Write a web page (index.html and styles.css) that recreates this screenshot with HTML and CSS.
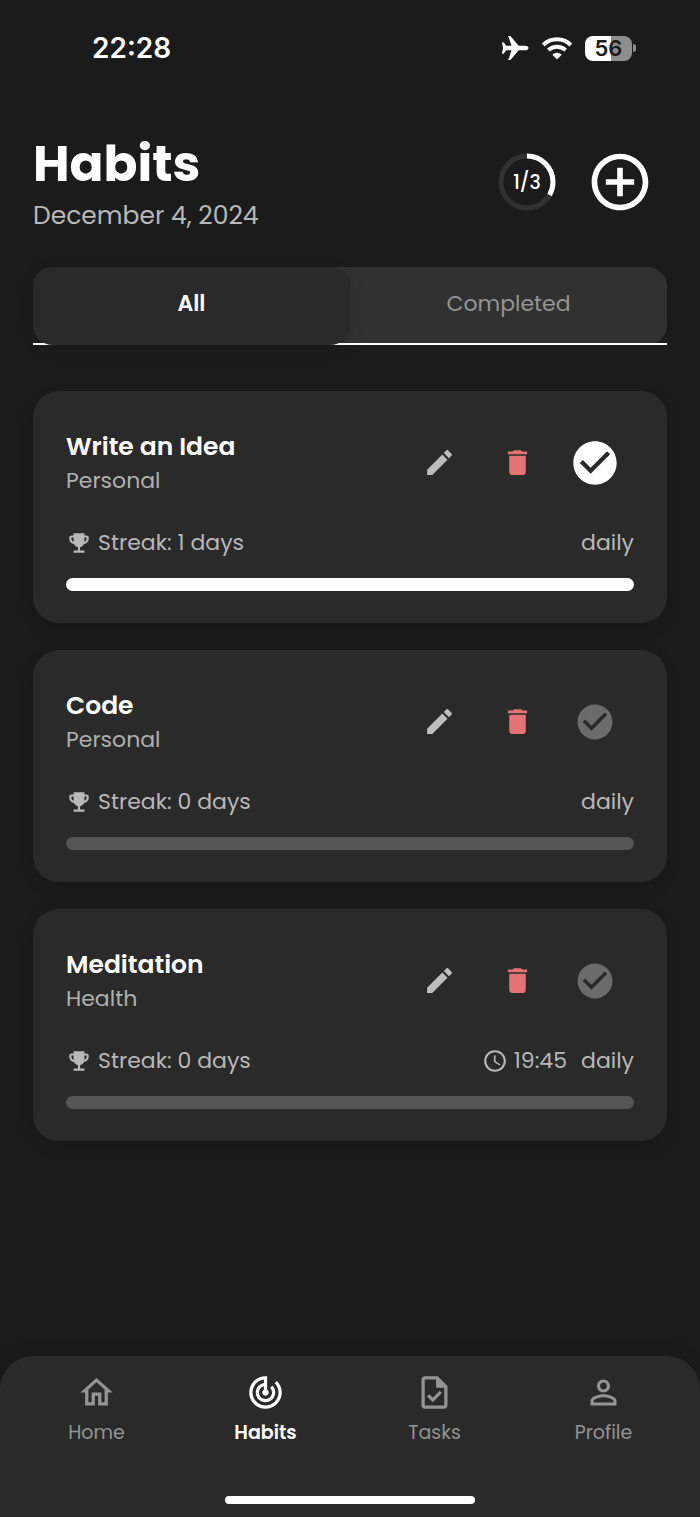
FILE: index.html
```html
<!DOCTYPE html>
<html lang="en">
<head>
  <meta charset="UTF-8">
  <meta name="viewport" content="width=device-width, initial-scale=1.0">
  <title>Habits</title>
  <link rel="stylesheet" href="styles.css">
</head>
<body>

<!-- Shared icons -->
<svg class="sprite" aria-hidden="true">
  <symbol id="icon-edit" viewBox="0 0 24 24">
    <path d="M3 17.25V21h3.75L17.81 9.94l-3.75-3.75L3 17.25zM20.71 7.04c.39-.39.39-1.02 0-1.41l-2.34-2.34c-.39-.39-1.02-.39-1.41 0l-1.83 1.83 3.75 3.75 1.83-1.83z"/>
  </symbol>
  <symbol id="icon-delete" viewBox="0 0 24 24">
    <path d="M6 19c0 1.1.9 2 2 2h8c1.1 0 2-.9 2-2V7H6v12zM19 4h-3.5l-1-1h-5l-1 1H5v2h14V4z"/>
  </symbol>
  <symbol id="icon-check" viewBox="0 0 24 24">
    <path d="M12 2C6.48 2 2 6.48 2 12s4.48 10 10 10 10-4.48 10-10S17.52 2 12 2zm-2 15l-5-5 1.41-1.41L10 14.17l7.59-7.59L19 8l-9 9z"/>
  </symbol>
  <symbol id="icon-trophy" viewBox="0 0 24 24">
    <path d="M19 5h-2V3H7v2H5c-1.1 0-2 .9-2 2v1c0 2.55 1.92 4.63 4.39 4.94.63 1.5 1.98 2.63 3.61 2.96V19H7v2h10v-2h-4v-3.1c1.63-.33 2.98-1.46 3.61-2.96C19.08 12.63 21 10.55 21 8V7c0-1.1-.9-2-2-2zM5 8V7h2v3.82C5.84 10.4 5 9.3 5 8zm14 0c0 1.3-.84 2.4-2 2.82V7h2v1z"/>
  </symbol>
  <symbol id="icon-clock" viewBox="0 0 24 24">
    <path d="M11.99 2C6.47 2 2 6.48 2 12s4.47 10 9.99 10C17.52 22 22 17.52 22 12S17.52 2 11.99 2zM12 20c-4.42 0-8-3.58-8-8s3.58-8 8-8 8 3.58 8 8-3.58 8-8 8zm.5-13H11v6l5.25 3.15.75-1.23-4.5-2.67z"/>
  </symbol>
</svg>

<div class="status-bar">
  <span class="clock">22:28</span>
  <div class="status-icons">
    <svg class="plane" viewBox="0 0 28 26" aria-hidden="true">
      <path d="M27.5 13c0-1.6-1.6-2.3-3.6-2.3h-6.2L10.3 1.9C9.7 1.2 9.2 1 8.4 1H7.2l3.4 9.7H5.2L3 7.8C2.700 7.400 2.400 7.200 1.900 7.200H1L2 13 1 18.800h.9c.5 0 .8-.2 1.100-.6l2.200-2.900h5.400L7.200 25h1.200c.8 0 1.300-.2 1.900-.9l7.400-8.800h6.200c2 0 3.600-.7 3.600-2.300z"/>
    </svg>
    <svg class="wifi" viewBox="0 0 32 24" aria-hidden="true">
      <path class="wifi-arc" d="M2.200 9a19.500 19.500 0 0 1 27.600 0M7.400 14.200a12.200 12.200 0 0 1 17.200 0"/>
      <path d="M16 23.500l4.700-4.800a6.700 6.700 0 0 0-9.400 0z"/>
    </svg>
    <div class="battery"><span class="battery-body">56</span><span class="battery-tip"></span></div>
  </div>
</div>

<main>
  <header class="header">
    <div>
      <h1>Habits</h1>
      <p class="date">December 4, 2024</p>
    </div>
    <div class="header-actions">
      <div class="ring">
        <svg viewBox="0 0 58 58" aria-hidden="true">
          <circle class="ring-track" cx="29" cy="29" r="26"/>
          <circle class="ring-value" cx="29" cy="29" r="26" pathLength="3"/>
        </svg>
        <span>1/3</span>
      </div>
      <button class="add-btn" aria-label="Add habit">
        <svg viewBox="0 0 24 24"><path d="M13 7h-2v4H7v2h4v4h2v-4h4v-2h-4V7zm-1-5C6.48 2 2 6.48 2 12s4.48 10 10 10 10-4.48 10-10S17.52 2 12 2zm0 18c-4.41 0-8-3.59-8-8s3.59-8 8-8 8 3.59 8 8-3.59 8-8 8z"/></svg>
      </button>
    </div>
  </header>

  <div class="tab-bar">
    <div class="tabs" role="tablist">
      <button class="tab active" role="tab" aria-selected="true">All</button>
      <button class="tab" role="tab" aria-selected="false">Completed</button>
    </div>
  </div>

  <section class="habits">
    <article class="card done">
      <div class="card-top">
        <div>
          <h2>Write an Idea</h2>
          <p class="category">Personal</p>
        </div>
        <div class="actions">
          <button class="edit" aria-label="Edit"><svg><use href="#icon-edit"/></svg></button>
          <button class="delete" aria-label="Delete"><svg><use href="#icon-delete"/></svg></button>
          <button class="check" aria-label="Mark as not done"><svg><use href="#icon-check"/></svg></button>
        </div>
      </div>
      <div class="card-info">
        <span class="meta"><svg><use href="#icon-trophy"/></svg>Streak: 1 days</span>
        <span class="repeat">daily</span>
      </div>
      <div class="bar"></div>
    </article>

    <article class="card">
      <div class="card-top">
        <div>
          <h2>Code</h2>
          <p class="category">Personal</p>
        </div>
        <div class="actions">
          <button class="edit" aria-label="Edit"><svg><use href="#icon-edit"/></svg></button>
          <button class="delete" aria-label="Delete"><svg><use href="#icon-delete"/></svg></button>
          <button class="check" aria-label="Mark as done"><svg><use href="#icon-check"/></svg></button>
        </div>
      </div>
      <div class="card-info">
        <span class="meta"><svg><use href="#icon-trophy"/></svg>Streak: 0 days</span>
        <span class="repeat">daily</span>
      </div>
      <div class="bar"></div>
    </article>

    <article class="card">
      <div class="card-top">
        <div>
          <h2>Meditation</h2>
          <p class="category">Health</p>
        </div>
        <div class="actions">
          <button class="edit" aria-label="Edit"><svg><use href="#icon-edit"/></svg></button>
          <button class="delete" aria-label="Delete"><svg><use href="#icon-delete"/></svg></button>
          <button class="check" aria-label="Mark as done"><svg><use href="#icon-check"/></svg></button>
        </div>
      </div>
      <div class="card-info">
        <span class="meta"><svg><use href="#icon-trophy"/></svg>Streak: 0 days</span>
        <span class="meta"><svg><use href="#icon-clock"/></svg>19:45</span>
        <span class="repeat">daily</span>
      </div>
      <div class="bar"></div>
    </article>
  </section>
</main>

<footer class="bottom">
  <nav class="nav">
    <a href="#home">
      <svg viewBox="0 0 24 24"><path d="M12 5.69l5 4.5V18h-2v-6H9v6H7v-7.81l5-4.5M12 3L2 12h3v8h6v-6h2v6h6v-8h3L12 3z"/></svg>
      Home
    </a>
    <a href="#habits" class="current" aria-current="page">
      <svg viewBox="0 0 24 24"><path d="M19.07 4.93l-1.41 1.41C19.1 7.79 20 9.79 20 12c0 4.42-3.58 8-8 8s-8-3.58-8-8c0-4.08 3.05-7.44 7-7.93v2.02C8.16 6.57 6 9.03 6 12c0 3.31 2.69 6 6 6s6-2.69 6-6c0-1.66-.67-3.16-1.76-4.24l-1.41 1.41C15.55 9.9 16 10.9 16 12c0 2.21-1.79 4-4 4s-4-1.79-4-4c0-1.86 1.28-3.41 3-3.86v2.14c-.6.35-1 .98-1 1.72 0 1.1.9 2 2 2s2-.9 2-2c0-.74-.4-1.38-1-1.72V2h-1C6.48 2 2 6.48 2 12s4.48 10 10 10 10-4.48 10-10c0-2.76-1.12-5.26-2.93-7.07z"/></svg>
      Habits
    </a>
    <a href="#tasks">
      <svg viewBox="0 0 24 24"><path d="M14 2H6c-1.1 0-2 .9-2 2v16c0 1.1.89 2 1.99 2H18c1.1 0 2-.9 2-2V8l-6-6zm4 18H6V4h7v5h5v11zm-9.18-6.95L7.4 14.46 10.94 18l5.66-5.66-1.41-1.41-4.24 4.24-2.13-2.12z"/></svg>
      Tasks
    </a>
    <a href="#profile">
      <svg viewBox="0 0 24 24"><path d="M12 5.9c1.16 0 2.1.94 2.1 2.1s-.94 2.1-2.1 2.1S9.9 9.16 9.9 8s.94-2.1 2.1-2.1m0 9c2.97 0 6.1 1.46 6.1 2.1v1.1H5.9V17c0-.64 3.13-2.1 6.1-2.1M12 4C9.79 4 8 5.79 8 8s1.79 4 4 4 4-1.79 4-4-1.79-4-4-4zm0 9c-2.67 0-8 1.34-8 4v3h16v-3c0-2.66-5.33-4-8-4z"/></svg>
      Profile
    </a>
  </nav>
  <div class="home-indicator"></div>
</footer>

</body>
</html>
```
FILE: styles.css
```css
* {
  box-sizing: border-box;
}

body {
  margin: 0;
  min-height: 100vh;
  display: flex;
  flex-direction: column;
  background: #1b1b1b;
  color: #fff;
  font-family: Poppins, Inter, sans-serif;
}

h1, h2, p {
  margin: 0;
}

button {
  padding: 0;
  border: none;
  background: none;
  color: inherit;
  font: inherit;
  cursor: pointer;
}

svg {
  display: block;
  fill: currentColor;
}

.sprite {
  display: none;
}

/* Status bar */
.status-bar {
  height: 96px;
  padding: 0 64px 0 92px;
  display: flex;
  align-items: center;
  justify-content: space-between;
}

.clock {
  font-family: Inter, sans-serif;
  font-size: 28px;
  font-weight: 600;
}

.status-icons {
  display: flex;
  align-items: center;
  gap: 12px;
}

.plane {
  width: 28px;
  height: 26px;
}

.wifi {
  width: 32px;
  height: 24px;
}

.wifi-arc {
  fill: none;
  stroke: #fff;
  stroke-width: 4;
}

.battery {
  display: flex;
  align-items: center;
  gap: 1px;
}

.battery-body {
  width: 47px;
  line-height: 25px;
  border-radius: 8px;
  background: linear-gradient(to right, #fff 56%, #8e8e8e 56%);
  color: #1b1b1b;
  font-family: Inter, sans-serif;
  font-size: 22px;
  font-weight: 600;
  text-align: center;
}

.battery-tip {
  width: 3px;
  height: 8px;
  border-radius: 0 4px 4px 0;
  background: #8e8e8e;
}

/* Page */
main {
  flex: 1;
  padding: 36px 33px 48px;
}

.header {
  display: flex;
  align-items: center;
  justify-content: space-between;
  margin-bottom: 35px;
}

h1 {
  font-size: 50px;
  line-height: 64px;
  font-weight: 700;
}

.date {
  margin-top: 4px;
  font-size: 25px;
  line-height: 32px;
  color: #b8b8b8;
}

.header-actions {
  display: flex;
  align-items: center;
  gap: 30px;
  padding-right: 13px;
}

.ring {
  display: grid;
  place-items: center;
  font-size: 19px;
  font-weight: 500;
}

.ring > * {
  grid-area: 1 / 1;
}

.ring svg {
  width: 58px;
  height: 58px;
  fill: none;
  stroke-width: 5;
  transform: rotate(-90deg);
}

.ring-track {
  stroke: #313131;
}

.ring-value {
  stroke: #fff;
  stroke-dasharray: 1 2;
}

.add-btn svg {
  width: 68px;
  height: 68px;
}

/* Tabs, with a divider line that runs behind the selected tab */
.tab-bar {
  margin-bottom: 46px;
  background: linear-gradient(#fff, #fff) bottom / 100% 2px no-repeat;
}

.tabs {
  display: flex;
  border-radius: 20px;
  background:
    linear-gradient(#fff, #fff) bottom / 100% 2px no-repeat,
    #313131;
}

.tab {
  flex: 1;
  height: 78px;
  padding-bottom: 5px;
  border-radius: 20px;
  font-size: 22px;
  color: #949494;
}

.tab.active {
  background: #2a2a2a;
  color: #fff;
  font-weight: 600;
  box-shadow: 0 3px 16px rgba(0, 0, 0, 0.1);
}

/* Habit cards */
.habits {
  display: flex;
  flex-direction: column;
  gap: 27px;
}

.card {
  padding: 33px 33px 32px;
  border-radius: 26px;
  background: #2a2a2a;
  box-shadow: 0 6px 16px rgba(0, 0, 0, 0.12);
}

.card-top {
  display: flex;
  align-items: center;
  justify-content: space-between;
  height: 77px;
}

h2 {
  margin-top: 2px;
  font-size: 25px;
  line-height: 34px;
  font-weight: 600;
}

.category {
  font-size: 22px;
  line-height: 34px;
  color: #b0b0b0;
}

.actions {
  display: flex;
}

.actions button {
  width: 78px;
  height: 77px;
  display: grid;
  place-items: center;
}

.actions svg {
  width: 33px;
  height: 33px;
}

.actions .edit {
  color: #bdbdbd;
}

.actions .delete {
  color: #e57373;
}

.actions .check {
  color: #6b6b6b;
}

.actions .check svg {
  width: 42px;
  height: 42px;
}

.done .actions .check {
  color: #fff;
}

.done .actions .check svg {
  width: 52px;
  height: 52px;
}

.card-info {
  display: flex;
  align-items: center;
  gap: 14px;
  margin: 24px 0 17px;
  font-size: 22px;
  line-height: 36px;
  color: #b8b8b8;
}

.meta {
  display: flex;
  align-items: center;
  gap: 6px;
}

.meta svg {
  width: 26px;
  height: 26px;
}

.meta:first-child {
  margin-right: auto;
}

.bar {
  height: 13px;
  border-radius: 7px;
  background: #555;
}

.done .bar {
  background: #fff;
}

/* Bottom navigation */
.bottom {
  padding: 17px 12px 13px;
  border-radius: 33px 33px 0 0;
  background: #2a2a2a;
  box-shadow: 0 -4px 16px rgba(0, 0, 0, 0.12);
}

.nav {
  display: flex;
  margin-bottom: 50px;
}

.nav a {
  flex: 1;
  display: flex;
  flex-direction: column;
  align-items: center;
  gap: 8px;
  color: #949494;
  font-size: 19px;
  line-height: 26px;
  text-decoration: none;
}

.nav svg {
  width: 39px;
  height: 39px;
}

.nav .current {
  color: #fff;
  font-weight: 600;
}

.home-indicator {
  width: 250px;
  height: 8px;
  margin: 0 auto;
  border-radius: 4px;
  background: #fff;
}
```
